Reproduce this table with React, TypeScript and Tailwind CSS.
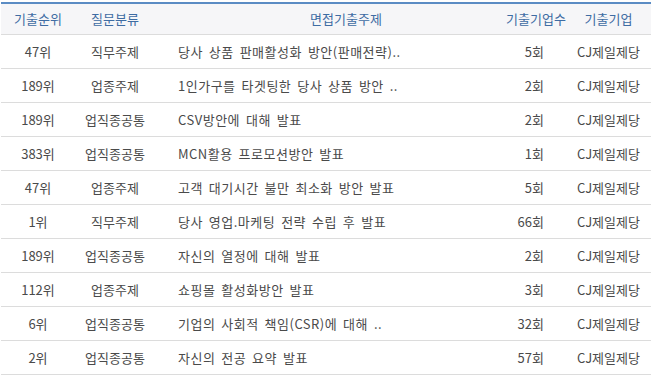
type Row = {
  rank: string;
  category: string;
  topic: string;
  count: string;
  company: string;
};

const rows: Row[] = [
  { rank: "47위", category: "직무주제", topic: "당사 상품 판매활성화 방안(판매전략)..", count: "5회", company: "CJ제일제당" },
  { rank: "189위", category: "업종주제", topic: "1인가구를 타겟팅한 당사 상품 방안 ..", count: "2회", company: "CJ제일제당" },
  { rank: "189위", category: "업직종공통", topic: "CSV방안에 대해 발표", count: "2회", company: "CJ제일제당" },
  { rank: "383위", category: "업직종공통", topic: "MCN활용 프로모션방안 발표", count: "1회", company: "CJ제일제당" },
  { rank: "47위", category: "업종주제", topic: "고객 대기시간 불만 최소화 방안 발표", count: "5회", company: "CJ제일제당" },
  { rank: "1위", category: "직무주제", topic: "당사 영업.마케팅 전략 수립 후 발표", count: "66회", company: "CJ제일제당" },
  { rank: "189위", category: "업직종공통", topic: "자신의 열정에 대해 발표", count: "2회", company: "CJ제일제당" },
  { rank: "112위", category: "업종주제", topic: "쇼핑몰 활성화방안 발표", count: "3회", company: "CJ제일제당" },
  { rank: "6위", category: "업직종공통", topic: "기업의 사회적 책임(CSR)에 대해 ..", count: "32회", company: "CJ제일제당" },
  { rank: "2위", category: "업직종공통", topic: "자신의 전공 요약 발표", count: "57회", company: "CJ제일제당" },
];

const cols = "grid grid-cols-[74px_80px_345px_72px_79px]";

export default function App() {
  return (
    <div
      className="w-[650px] mt-[2px] ml-[1px] bg-white text-[13px] text-[#4a4a4a]"
      style={{ fontFamily: '"Noto Sans CJK KR", "Noto Sans", sans-serif' }}
    >
      <div className={`${cols} h-[33px] items-center border-t-2 border-[#5b8cc4] border-b border-b-[#dcdcdc] bg-[#f6f6f8] text-[#3e6ca3]`}>
        <div className="text-center">기출순위</div>
        <div className="text-center">질문분류</div>
        <div className="text-center pl-[37px]">면접기출주제</div>
        <div className="text-center">기출기업수</div>
        <div className="text-center pr-[6px]">기출기업</div>
      </div>
      {rows.map((r, i) => (
        <div key={i} className={`${cols} h-[34px] items-center border-b border-[#dcdcdc]`}>
          <div className="text-center">{r.rank}</div>
          <div className="text-center">{r.category}</div>
          <div className="pl-[23px] whitespace-nowrap tracking-[0.5px] [word-spacing:2.5px]">{r.topic}</div>
          <div className="text-right pr-[28px]">{r.count}</div>
          <div className="text-center pr-[6px]">{r.company}</div>
        </div>
      ))}
    </div>
  );
}
